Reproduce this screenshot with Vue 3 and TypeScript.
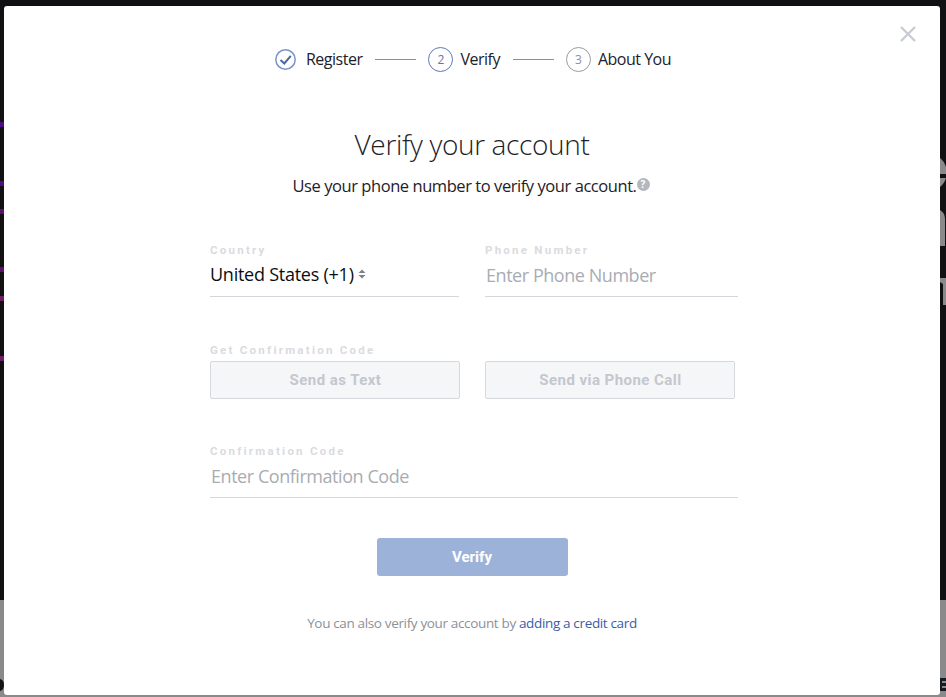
<script setup lang="ts">
const stripes = [
  { top: 122, color: '#4a0f85' },
  { top: 181, color: '#4a0f85' },
  { top: 209, color: '#5c1070' },
  { top: 267, color: '#5c1070' },
  { top: 296, color: '#6e1f60' },
  { top: 356, color: '#6e1f60' },
]
</script>

<template>
  <div class="page">
    <div class="backdrop-dark"></div>
    <div class="backdrop-light"></div>
    <span
      v-for="stripe in stripes"
      :key="stripe.top"
      class="stripe"
      :style="{ top: stripe.top + 'px', backgroundColor: stripe.color }"
    ></span>
    <!-- slivers of the page behind the modal -->
    <svg class="slivers" width="946" height="697" viewBox="0 0 946 697">
      <path d="M940 158 Q944 161 946 167 V174 H940 Z M940 178 H946 Q944 184 940 187 Z" fill="#8a8a8a" />
      <path d="M940 210 Q945 213 945 219 V246 H940 Z" fill="#8a8a8a" />
      <path d="M940 278 H946 V305 H943 V284 L940 282 Z" fill="#8a8a8a" />
      <path d="M0 679 Q4 680 4 685 Q4 690 0 691 Z" fill="#141414" />
      <path d="M940 678 H946 V681 H942 V683 H946 V686 H942 V688 H946 V691 H940 Z" fill="#141a22" />
    </svg>

    <div class="modal">
      <button class="close" aria-label="Close">
        <svg width="16" height="16" viewBox="0 0 16 16">
          <path d="M1 1 L15 15 M15 1 L1 15" stroke="#c9ccd3" stroke-width="2.4" fill="none" />
        </svg>
      </button>

      <div class="steps">
        <div class="step">
          <svg class="check" width="21" height="21" viewBox="0 0 21 21">
            <circle cx="10.5" cy="10.5" r="9.7" fill="none" stroke="#7a94c9" stroke-width="1.5" />
            <path d="M5.5 11 L9.3 14.5 L15.8 6.8" fill="none" stroke="#4a67a8" stroke-width="2" />
          </svg>
          <span class="step-label">Register</span>
        </div>
        <span class="line"></span>
        <div class="step">
          <span class="num active">2</span>
          <span class="step-label">Verify</span>
        </div>
        <span class="line"></span>
        <div class="step">
          <span class="num">3</span>
          <span class="step-label">About You</span>
        </div>
      </div>

      <h1>Verify your account</h1>
      <p class="sub">
        Use your phone number to verify your account.<span class="help">?</span>
      </p>

      <div class="form">
        <div class="row first">
          <div class="field">
            <label>Country</label>
            <div class="value">
              United States (+1)
              <svg class="sort" width="8" height="10" viewBox="0 0 8 10">
                <path d="M4 0.5 L7.5 4 H0.5 Z M4 9.5 L0.5 6 H7.5 Z" fill="#7d818c" />
              </svg>
            </div>
          </div>
          <div class="field">
            <label>Phone Number</label>
            <div class="value placeholder">Enter Phone Number</div>
          </div>
        </div>

        <div class="code-block">
          <label>Get Confirmation Code</label>
          <div class="buttons">
            <button class="btn">Send as Text</button>
            <button class="btn">Send via Phone Call</button>
          </div>
        </div>

        <div class="field wide">
          <label>Confirmation Code</label>
          <div class="value placeholder">Enter Confirmation Code</div>
        </div>
      </div>

      <button class="verify">Verify</button>

      <p class="foot">
        You can also verify your account by <a href="#">adding a credit card</a>
      </p>
    </div>
  </div>
</template>

<style>
html,
body {
  margin: 0;
  overflow: hidden;
}
</style>

<style scoped>
.page {
  position: relative;
  width: 946px;
  height: 697px;
  overflow: hidden;
  display: flex;
  flex-direction: column;
  font-family: "Open Sans", "Noto Sans", sans-serif;
}

.backdrop-dark {
  height: 600px;
  background: #111113;
}

.backdrop-light {
  flex: 1;
  background: #8a8a8a;
}

.stripe {
  position: absolute;
  left: 0;
  width: 4px;
  height: 5px;
}

.slivers {
  position: absolute;
  left: 0;
  top: 0;
}

.modal {
  position: absolute;
  left: 4px;
  top: 6px;
  width: 936px;
  height: 689px;
  background: #fff;
  border-radius: 3px;
  display: flex;
  flex-direction: column;
  align-items: center;
}

.close {
  position: absolute;
  top: 20px;
  right: 24px;
  padding: 0;
  border: 0;
  background: none;
  line-height: 0;
}

.steps {
  display: flex;
  align-items: center;
  height: 26px;
  margin: 40px 0 0 2px;
  font-size: 16px;
  color: #1d2129;
}

.step {
  display: flex;
  align-items: center;
}

.check {
  margin-right: 10px;
}

.step-label {
  letter-spacing: -0.5px;
}

.num {
  width: 25px;
  height: 25px;
  margin-right: 7px;
  border: 1px solid #9a9ba0;
  border-radius: 50%;
  box-sizing: border-box;
  display: flex;
  align-items: center;
  justify-content: center;
  font-size: 12px;
  color: #8d8f96;
}

.num.active {
  border-color: #5a78bb;
  color: #5a78bb;
}

.line {
  width: 41px;
  height: 1px;
  margin: 0 12px 0 13px;
  background: #8d8f96;
}

h1 {
  margin: 53px 0 0;
  font-size: 28px;
  line-height: 38px;
  font-weight: 300;
  color: #1d2129;
  letter-spacing: -0.35px;
}

.sub {
  margin: 12px 0 0 -2px;
  display: flex;
  align-items: center;
  font-size: 16.5px;
  line-height: 22px;
  color: #1d2129;
  letter-spacing: -0.44px;
}

.help {
  width: 13px;
  height: 13px;
  margin: 0 0 4px 0;
  border-radius: 50%;
  background: #b4b7bd;
  color: #fff;
  font-size: 10px;
  font-weight: 700;
  line-height: 13px;
  text-align: center;
  letter-spacing: 0;
}

.form {
  width: 528px;
  margin: 47px 0 0 4px;
  display: flex;
  flex-direction: column;
}

.row {
  display: flex;
  gap: 25px;
}

.field {
  width: 249px;
}

.row .field:last-child {
  width: 253px;
  margin-left: 1px;
}

.field.wide {
  width: 528px;
  margin-top: 46px;
}

label {
  display: block;
  font-family: Roboto, Arial, sans-serif;
  font-size: 11.5px;
  line-height: 13px;
  font-weight: 700;
  letter-spacing: 2.25px;
  color: #dadbdf;
}

.value {
  height: 40px;
  padding-left: 1px;
  display: flex;
  align-items: center;
  gap: 4px;
  border-bottom: 1px solid #d3d6db;
  box-sizing: border-box;
  font-size: 18px;
  letter-spacing: -0.25px;
  color: #0b0d12;
}

.first .field:first-child .value {
  padding-left: 0;
  padding-bottom: 6px;
}

.placeholder {
  padding-bottom: 4px;
  letter-spacing: -0.45px;
  color: #a9acb3;
}

.code-block {
  margin-top: 47px;
}

.buttons {
  display: flex;
  gap: 25px;
  margin-top: 4px;
}

.btn {
  width: 250px;
  height: 38px;
  padding: 0 0 0 1px;
  border: 1px solid #d5d8dd;
  border-radius: 2px;
  background: #f5f6f7;
  font-family: Roboto, Arial, sans-serif;
  font-size: 15px;
  font-weight: 700;
  letter-spacing: 0.45px;
  color: #c4c7cd;
}

.verify {
  width: 191px;
  height: 38px;
  margin-top: 40px;
  padding: 0;
  border: 0;
  border-radius: 3px;
  background: #9cb2d8;
  font-family: Roboto, Arial, sans-serif;
  font-size: 15px;
  font-weight: 700;
  color: #fff;
}

.foot {
  margin: 37px 0 0;
  font-size: 13.5px;
  line-height: 20px;
  letter-spacing: -0.35px;
  color: #8d9099;
}

.foot a {
  color: #3b5ca8;
  text-decoration: none;
}
</style>
